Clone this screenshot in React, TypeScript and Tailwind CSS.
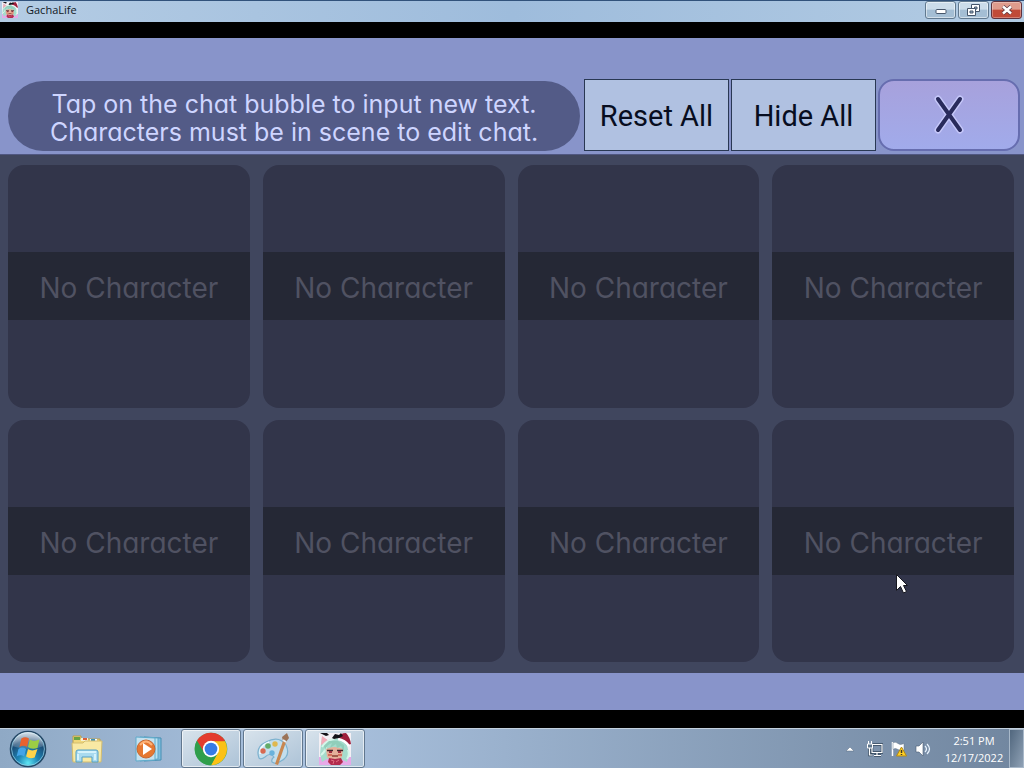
import type { ReactNode } from 'react';

const ROUND = "font-['Inter',sans-serif] [font-feature-settings:'cv11']";

function Avatar({ className }: { className: string }) {
  return (
    <svg viewBox="0 0 32 32" className={className} aria-hidden="true">
      <rect width="32" height="32" fill="#f4f0f5" />
      <path d="M0 24h32v8H0z" fill="#e7a9e8" />
      <path d="M2 11 3 4l7 4 9-3 9 7 2 9-2 8-6-3H8l-5 3-2-8z" fill="#a5dccd" />
      <path d="m2 12 1-9 7 5z" fill="#f1a9b8" />
      <path d="M3 14q4-7 12-8M2 22q4-3 5-8M29 17q2 5-1 9" stroke="#d6f6ea" strokeWidth="2" fill="none" />
      <path d="M7 16q8-4 17 0l-1 8-4 3h-7l-4-3z" fill="#e5b09a" />
      <path d="M6 18q1-6 7-8l-2 5 6-4 1 4 4-2 3 6v-7l-6-4H10l-5 5z" fill="#91ceba" />
      <path d="M8 17.500h6M18 17.500h6" stroke="#42252c" strokeWidth="1.600" />
      <path d="M10 18h3v2h-3zM19 18h3v2h-3z" fill="#9d3040" />
      <path d="M9 22h4M19 22h4" stroke="#d4725f" strokeWidth="2" />
      <path d="M13 22h6v2h-6z" fill="#a05c4b" />
      <path d="m10 25 6 1 6-1 2 4-3 3H12l-3-3z" fill="#b22b4d" />
      <path d="m12 27 3 1-1 3M20 27l-3 2" stroke="#df6d80" fill="none" />
      <path d="M19 5q2-5 8-5 4 4 5 11l-3 1q-4-5-10-7z" fill="#9d1f3c" />
      <path d="M19 6q7 1 11 7" stroke="#fff" strokeWidth="2.500" fill="none" />
      <path d="m13 5 3-4 4 1 2-2 2 3-4 2-5 1zM1 0h7l2 2-3 1z" fill="#151319" />
    </svg>
  );
}

function StartOrb() {
  return (
    <svg viewBox="0 0 40 40" className="size-[38px]" aria-hidden="true">
      <defs>
        <radialGradient id="orb" cx="50%" cy="90%" r="85%">
          <stop offset="0" stopColor="#5de6f4" />
          <stop offset=".35" stopColor="#1d84b4" />
          <stop offset=".75" stopColor="#1b4973" />
          <stop offset="1" stopColor="#7191af" />
        </radialGradient>
        <linearGradient id="gloss" x2="0" y2="1">
          <stop stopColor="#fff" stopOpacity=".7" />
          <stop offset="1" stopColor="#fff" stopOpacity=".1" />
        </linearGradient>
      </defs>
      <circle cx="20" cy="20" r="18.5" fill="url(#orb)" stroke="#234765" strokeWidth="1.5" />
      <circle cx="20" cy="20" r="17.3" fill="none" stroke="#91cfe6" strokeWidth=".8" />
      <path d="M4 17a16 15 0 0 1 32 0q-15 6-32 0z" fill="url(#gloss)" />
      <path d="M13 9q4-3 8 0l-2 9q-4-3-8 0z" fill="#e8622f" />
      <path d="M22 10q4 3 10 0l-2 9q-6 2-10-1z" fill="#9ccd45" />
      <path d="M10 20q4-3 8 0l-2 8q-4-3-8 0z" fill="#42a4e8" />
      <path d="M20 20q4 3 10 0l-3 9q-5 2-9-1z" fill="#ffd34a" />
    </svg>
  );
}

function Explorer() {
  return (
    <svg viewBox="0 0 34 30" className="h-[30px] w-[34px]" aria-hidden="true">
      <path d="M3 2h8v3h19v22H3z" fill="#efd77a" stroke="#ba9e4c" />
      <path d="M4 3h6v3H4z" fill="#69a444" />
      <path d="M11 4h7v3h-7z" fill="#f5f2d5" />
      <path d="M13 4h4v2h-4z" fill="#db603a" />
      <path d="M20 5h7v3h-7z" fill="#fafaff" />
      <path d="M21 5h4v2h-4z" fill="#3c91b4" />
      <path d="M2 9h11l2-2h17l-1 21H3z" fill="#f8e9a4" stroke="#d3bd70" />
      <path d="M6 28V18q0-2 2-2h18q2 0 2 2v10h-6v-5H12v5z" fill="#a9daef" stroke="#539fc5" />
      <path d="M8 18h18M8 20v6M25 20v6" stroke="#e4faff" strokeWidth="1.5" />
    </svg>
  );
}

function MediaPlayer() {
  return (
    <svg viewBox="0 0 30 28" className="h-7 w-[30px]" aria-hidden="true">
      <path d="m10 2 17 1v22l-17 1z" fill="#80bddd" stroke="#478fb3" />
      <path d="m6 2 18 1v21L6 26z" fill="#b9e2f3" stroke="#5ca4c5" />
      <path d="m2 2 19 1v22L2 26z" fill="#c5e1ef" stroke="#5eabcb" />
      <circle cx="12" cy="14" r="9" fill="#e67831" stroke="#c56732" />
      <path d="M6 10q6-7 12 0" stroke="#ffb276" strokeWidth="2" fill="none" />
      <path d="m9 8 9 6-9 6z" fill="#fff" />
    </svg>
  );
}

function Chrome() {
  return (
    <svg viewBox="0 0 48 48" className="size-[34px]" aria-hidden="true">
      <circle cx="24" cy="24" r="23" fill="#34a853" />
      <path d="M24 24 4.1 12.5A23 23 0 0 1 43.9 12.5z" fill="#e33b2e" />
      <path d="M24 13h19.9A23 23 0 0 1 24 47l9.5-17.5z" fill="#fbc116" />
      <path d="m4.1 12.5 10.4 17L24 24V13z" fill="#e33b2e" />
      <path d="m4.1 12.5 10.4 17L24 35l9.5-5.5L24 47A23 23 0 0 1 4.1 12.5z" fill="#2f9e4b" />
      <circle cx="24" cy="24" r="11.5" fill="#fff" />
      <circle cx="24" cy="24" r="9" fill="#377be5" />
    </svg>
  );
}

function Paint() {
  return (
    <svg viewBox="0 0 36 34" className="h-[34px] w-9" aria-hidden="true">
      <path d="M4 26Q0 15 11 10q13-7 20 3 5 11-5 16-5 4-9 1-1-3 2-5-4-5-9 0-4 3-6 1z" fill="#c3deec" stroke="#7db2cf" strokeWidth="1.2" />
      <path d="M5 22q-1-8 9-12" stroke="#f1fbff" strokeWidth="1.5" fill="none" />
      <circle cx="8" cy="19" r="2.7" fill="#d76951" />
      <circle cx="13" cy="14" r="2.8" fill="#63ac69" />
      <circle cx="20" cy="12" r="2.7" fill="#dfb84f" />
      <circle cx="17" cy="21" r="2.7" fill="#69b2dc" />
      <path d="m20 32 8-23 3 1-8 23z" fill="#c88750" />
      <path d="m28 9-1-4 5-4 2 5-3 4z" fill="#9b7358" />
      <path d="m28 8 3 2" stroke="#e5eef3" strokeWidth="2" />
    </svg>
  );
}

function WindowButton({ label, danger, children }: { label: string; danger?: boolean; children: ReactNode }) {
  return (
    <button
      aria-label={label}
      className={
        danger
          ? 'flex h-[18px] w-[31px] items-center justify-center rounded-[3px] border border-[#60333e] bg-linear-to-b from-[#df9b8c] from-45% to-[#c04a38] to-50% inset-ring inset-ring-white/30'
          : 'flex h-[18px] w-[31px] items-center justify-center rounded-[3px] border border-[#61798f] bg-linear-to-b from-[#cbdcea] from-45% to-[#a4bed4] to-50% inset-ring inset-ring-white/50'
      }
    >
      {children}
    </button>
  );
}

function TitleBar() {
  return (
    <header className="flex h-[22px] items-start justify-between border-t border-[#31527b] bg-linear-to-r from-[#b4cce4] via-[#9ebcdc] to-[#b2cbe3] px-[2px]">
      <div className="flex items-center gap-2">
        <Avatar className="size-4" />
        <h1 className="font-['Open_Sans',sans-serif] text-[11px] leading-[18px] text-[#101824]">GachaLife</h1>
      </div>
      <div className="flex gap-[2px]">
        <WindowButton label="Minimize">
          <svg viewBox="0 0 12 12" className="size-3" aria-hidden="true">
            <rect x="1" y="5.5" width="10" height="4" rx="1" fill="#fff" stroke="#46566b" />
          </svg>
        </WindowButton>
        <WindowButton label="Restore">
          <svg viewBox="0 0 13 12" className="h-3 w-[13px]" aria-hidden="true">
            <path d="M4.5.5h8v7h-8z" fill="#fff" stroke="#46566b" />
            <path d="M7.5 3h2.5v2H7.5z" fill="#9db5ca" stroke="#46566b" />
            <path d="M.5 4.500h8v7h-8z" fill="#fff" stroke="#46566b" />
            <path d="M3 7h3v2H3z" fill="#9db5ca" stroke="#46566b" />
          </svg>
        </WindowButton>
        <WindowButton label="Close window" danger>
          <svg viewBox="0 0 12 12" className="size-3" aria-hidden="true">
            <path d="m2 2.500 8 7m0-7-8 7" stroke="#59343e" strokeWidth="4" />
            <path d="m2 2.500 8 7m0-7-8 7" stroke="#fff" strokeWidth="2.600" />
          </svg>
        </WindowButton>
      </div>
    </header>
  );
}

function Toolbar() {
  const action =
    "h-[72px] w-[145px] border border-[#293853] bg-[#b0c1e1] pt-1 font-['Roboto',sans-serif] text-[29px] text-[#070d20]";
  return (
    <div className="flex items-end bg-[#8894ca] pt-[41px] pr-1 pb-[3px] pl-2">
      <p className={`${ROUND} flex min-h-[70px] flex-1 items-center justify-center rounded-[35px] bg-[#535b87] pt-[3px] text-center text-[25px] leading-7 text-[#ced5ff]`}>
        <span>
          Tap on the chat bubble to input new text.
          <br />
          Characters must be in scene to edit chat.
        </span>
      </p>
      <div className="ml-1 flex gap-[2px]">
        <button className={action}>Reset All</button>
        <button className={action}>Hide All</button>
      </div>
      <button
        aria-label="Close chat"
        className="ml-[2px] flex h-[72px] w-[142px] items-center justify-center rounded-2xl border-2 border-[#666daf] bg-linear-to-b from-[#a7a1dc] to-[#a1abeb]"
      >
        <svg viewBox="0 0 34 42" className="h-[42px] w-[34px]" aria-hidden="true">
          <path d="m6 5 22 31M28 5 6 36" stroke="#c6c8fa" strokeWidth="7" strokeLinecap="round" />
          <path d="m6 5 22 31M28 5 6 36" stroke="#292b5c" strokeWidth="4" strokeLinecap="round" />
        </svg>
      </button>
    </div>
  );
}

const SLOTS = [1, 2, 3, 4, 5, 6, 7, 8];

function CharacterGrid() {
  return (
    <ul className="grid flex-1 grid-cols-4 grid-rows-2 gap-x-[13px] gap-y-3 border-t border-[#505781] bg-[#40465e] pt-[10px] pr-[10px] pb-[11px] pl-2">
      {SLOTS.map((slot) => (
        <li key={slot} className="flex min-h-40 flex-col justify-center rounded-2xl bg-[#32354a]">
          <p className={`${ROUND} bg-[#252835] pt-[18px] pb-[14px] text-center text-[28px] leading-9 text-[#505262]`}>No Character</p>
        </li>
      ))}
    </ul>
  );
}

function TaskButton({ label, open, children }: { label: string; open?: boolean; children: ReactNode }) {
  return (
    <button
      aria-label={label}
      className={
        open
          ? 'flex h-[39px] w-[60px] items-center justify-center rounded-[3px] border border-[#61778e] bg-linear-to-br from-[#d8e3ec] to-[#adc3d7] inset-ring inset-ring-white/60'
          : 'flex h-[39px] w-[60px] items-center justify-center'
      }
    >
      {children}
    </button>
  );
}

function Taskbar() {
  return (
    <footer className="flex h-10 items-start justify-between border-t border-[#c3d1df] bg-linear-to-r from-[#8fa9c5] via-[#aac2df] via-30% to-[#71869f]">
      <nav aria-label="Taskbar" className="flex gap-[2px]">
        <button aria-label="Start" className="flex h-[39px] w-[55px] items-center justify-center">
          <StartOrb />
        </button>
        <TaskButton label="Windows Explorer"><Explorer /></TaskButton>
        <TaskButton label="Windows Media Player"><MediaPlayer /></TaskButton>
        <TaskButton label="Google Chrome" open><Chrome /></TaskButton>
        <TaskButton label="Paint" open><Paint /></TaskButton>
        <TaskButton label="GachaLife" open><Avatar className="size-8" /></TaskButton>
      </nav>
      <div className="flex h-[39px] items-center">
        <div className="flex items-center gap-2">
          <button aria-label="Show hidden icons" className="mr-1">
            <svg viewBox="0 0 10 6" className="h-[6px] w-[10px]" aria-hidden="true">
              <path d="m1 5 4-4 4 4z" fill="#fff" stroke="#586c82" strokeWidth=".5" />
            </svg>
          </button>
          <button aria-label="Network">
            <svg viewBox="0 0 16 16" className="size-4" fill="none" aria-hidden="true">
              <path d="M5 3.500h10v8H5zM7 14.500h7M10 12v2M2.500 7v7h3" stroke="#34485c" strokeWidth="2.500" />
              <path d="M5 3.500h10v8H5zM7 14.500h7M10 12v2M2.500 7v7h3" stroke="#fff" strokeWidth="1.200" />
              <path d="M.5 3h5v4h-5zM1.500 3V0M4.500 3V0" fill="#60768c" stroke="#fff" />
            </svg>
          </button>
          <button aria-label="Action Center">
            <svg viewBox="0 0 16 16" className="size-4" aria-hidden="true">
              <path d="M1.500 1v14" stroke="#fff" strokeWidth="1.500" />
              <path d="M2 1.500q3-1 5 1t6 0v7q-3 1-6-1t-5 0z" fill="#fff" stroke="#637589" strokeWidth=".5" />
              <path d="m10.500 6 5 9h-10z" fill="#ffcf24" stroke="#b18918" />
              <path d="M10.500 9v3m0 1v1" stroke="#433a24" strokeWidth="1.500" />
            </svg>
          </button>
          <button aria-label="Volume">
            <svg viewBox="0 0 16 16" className="size-4" aria-hidden="true">
              <path d="M1 5h3l4-4v14l-4-4H1z" fill="#fff" stroke="#485d74" strokeWidth=".6" />
              <path d="M10 5q3 3 0 6M12 3q5 5 0 10" fill="none" stroke="#e9f4ff" strokeWidth="1.200" />
            </svg>
          </button>
        </div>
        <div className="w-[78px] pl-2 text-center font-['Open_Sans',sans-serif] text-[11px] leading-[17px] text-white">
          <p>2:51 PM</p>
          <p>12/17/2022</p>
        </div>
        <button aria-label="Show desktop" className="h-[39px] w-[15px] border border-[#a8b8c9] bg-linear-to-br from-[#51677e] to-[#8fa1b5]" />
      </div>
    </footer>
  );
}

export default function App() {
  return (
    <div className="relative flex min-h-screen flex-col bg-black">
      <TitleBar />
      <main className="mt-4 mb-[18px] flex flex-1 flex-col bg-[#8894ca] pb-[37px]">
        <Toolbar />
        <CharacterGrid />
      </main>
      <Taskbar />
      <svg viewBox="0 0 12 20" className="pointer-events-none absolute top-[574px] left-[896px] h-5 w-3" aria-hidden="true">
        <path d="M.5.500v16l4-4 3 6.500 3-1.500-3-6h4z" fill="#fff" stroke="#16171e" />
      </svg>
    </div>
  );
}
